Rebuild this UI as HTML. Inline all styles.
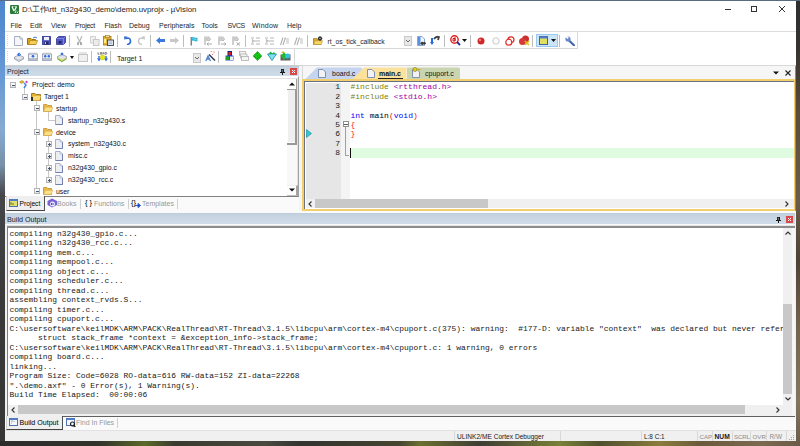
<!DOCTYPE html>
<html><head><meta charset="utf-8">
<style>
*{margin:0;padding:0;box-sizing:border-box}
html,body{width:800px;height:446px;overflow:hidden;background:#2f2e2a;position:relative;font-family:"Liberation Sans",sans-serif;font-size:7px;color:#1e1e1e}
.a{position:absolute}
.t{position:absolute;white-space:pre;line-height:10px}
.mono{font-family:"Liberation Mono",monospace}
.sep{position:absolute;width:1px;background:#c8c8c8}
</style></head><body>
<!-- desktop edges -->
<div class="a" style="left:0;top:0;width:5px;height:446px;background:linear-gradient(#4d85cc 0,#6498d6 70px,#86aad2 130px,#7890a8 165px,#44464a 195px,#3a3a3a 300px,#363636 446px)"></div>
<div class="a" style="left:796px;top:0;width:4px;height:446px;background:linear-gradient(#2e2e2e 0,#363330 50px,#5a4a3a 110px,#6a5c4a 200px,#4e4236 260px,#74644f 330px,#857560 400px,#6a5a48 446px)"></div>
<div class="a" style="left:0;top:441px;width:800px;height:5px;background:linear-gradient(90deg,#2c2c2a 0,#33332c 100px,#5a6a28 145px,#3a3a30 175px,#4a4a40 265px,#333330 300px,#454530 400px,#6a7030 420px,#3e3e34 480px,#7a8038 560px,#50502e 600px,#8a7c3c 660px,#6a5a3a 700px,#7a6a50 760px,#6a5a48 800px)"></div>
<div class="a" style="left:0;top:0;width:800px;height:1px;background:#5a6a80"></div>

<!-- window -->
<div class="a" id="win" style="left:5px;top:1px;width:791px;height:440px;background:#fff"></div>


<!-- title bar -->
<svg class="a" style="left:10px;top:5px" width="9" height="9" viewBox="0 0 9 9"><rect x="0" y="0" width="9" height="9" rx="1" fill="#2b7a3b"/><path d="M2 1.5L4 6M6.5 1.5L4.6 5.5" stroke="#f4fff4" stroke-width="1.3"/><path d="M2 1.5H7" stroke="#d8f0d8" stroke-width="0.8" stroke-dasharray="1 0.6"/><path d="M5 8L6.2 5.5M7 8.2L8 6.5" stroke="#e8f8e8" stroke-width="1"/></svg>
<div class="t" style="left:22px;top:5px;font-size:7.8px;color:#222">D:\<span style="font-size:7.8px;letter-spacing:-0.35px">工作</span>\rtt_n32g430_demo\demo.uvprojx - µVision</div>
<!-- caption buttons -->
<div class="a" style="left:725px;top:9px;width:6px;height:1px;background:#333"></div>
<div class="a" style="left:751px;top:6px;width:6px;height:6px;border:1px solid #333"></div>
<svg class="a" style="left:778px;top:5px" width="8" height="8"><path d="M1 1L7 7M7 1L1 7" stroke="#333" stroke-width="1"/></svg>
<!-- menu -->
<div class="t" style="left:10.5px;top:21px">File</div>
<div class="t" style="left:30px;top:21px">Edit</div>
<div class="t" style="left:51px;top:21px">View</div>
<div class="t" style="left:75px;top:21px;letter-spacing:-0.25px">Project</div>
<div class="t" style="left:104.5px;top:21px">Flash</div>
<div class="t" style="left:129px;top:21px">Debug</div>
<div class="t" style="left:159px;top:21px">Peripherals</div>
<div class="t" style="left:201.5px;top:21px">Tools</div>
<div class="t" style="left:227.5px;top:21px;letter-spacing:-0.45px">SVCS</div>
<div class="t" style="left:252px;top:21px;letter-spacing:0.25px">Window</div>
<div class="t" style="left:287px;top:21px">Help</div>
<div class="a" style="left:5px;top:31px;width:791px;height:1px;background:#dcdcdc"></div>
<!-- toolbar 1 -->
<div class="a" style="left:5px;top:48px;width:573px;height:1px;background:#d8d8d8"></div>
<div class="a" style="left:577px;top:32px;width:1px;height:17px;background:#d8d8d8"></div>
<div class="a" style="left:7px;top:35px;width:1px;height:11px;border-left:1px dotted #d4d4d4"></div>
<svg class="a" style="left:14px;top:36px" width="9" height="10" viewBox="0 0 9 10"><path d="M0.5 0.5H6L8.5 3V9.5H0.5Z" fill="#f4f6fa" stroke="#a8b0c0"/><path d="M6 0.5V3H8.5" fill="none" stroke="#a8b0c0"/></svg>
<svg class="a" style="left:27px;top:36px" width="11" height="9" viewBox="0 0 11 9"><path d="M0.5 2.5H4L5 3.5H8.5V8.5H0.5Z" fill="#d9a520" stroke="#a07010"/><path d="M1.5 8.5L3 4.5H10.5L9 8.5Z" fill="#f5cf5a" stroke="#b8861a" stroke-width="0.8"/><path d="M6 2Q8 0 10 2" stroke="#3a7ad0" fill="none"/></svg>
<svg class="a" style="left:42px;top:36px" width="9" height="9" viewBox="0 0 9 9"><rect x="0.5" y="0.5" width="8" height="8" fill="#4a52c4" stroke="#2e3690" stroke-width="0.8"/><rect x="2" y="1" width="5" height="3.2" fill="#eef0ff"/><rect x="2.5" y="5.5" width="4" height="3" fill="#24285a"/><rect x="3" y="6" width="1" height="2" fill="#c0c8f0"/></svg>
<svg class="a" style="left:56px;top:36px" width="10" height="9" viewBox="0 0 10 9"><path d="M2.5 0.5H9.5V6.5L7.5 8.5H0.5V2.5Z" fill="#5056c4" stroke="#2e3690" stroke-width="0.8"/><path d="M0.5 2.5H7.5V8.5M7.5 2.5L9.5 0.5" fill="none" stroke="#9098e8" stroke-width="0.7"/><rect x="2.5" y="5" width="3" height="2.5" fill="#24285a"/></svg>
<div class="sep" style="left:69px;top:35px;height:12px;background:#bdbdbd"></div>
<svg class="a" style="left:76px;top:36px" width="7" height="10" viewBox="0 0 7 10"><path d="M1 0L3.5 5.5M6 0L3.5 5.5" stroke="#b8b8b8" stroke-width="1.2" fill="none"/><path d="M1.5 6L3.5 5.5L2.5 9.5L0.8 8.5Z" fill="#a8a8a8"/><path d="M5.5 6L3.5 5.5L4.5 9.5L6.2 8.5Z" fill="#a0a0a0"/></svg>
<svg class="a" style="left:90px;top:36px" width="10" height="10" viewBox="0 0 10 10"><rect x="0.5" y="0.5" width="5" height="6.5" fill="#eeeeee" stroke="#d4d4d4"/><rect x="3.5" y="3.5" width="5.5" height="6" fill="#ececec" stroke="#c8c8c8"/></svg>
<svg class="a" style="left:103px;top:35px" width="11" height="11" viewBox="0 0 11 11"><rect x="0.5" y="1.5" width="7.5" height="8.5" fill="#e6b22a" stroke="#a07818" stroke-width="0.8"/><rect x="2.3" y="0.5" width="4" height="2" fill="#f4e4a0" stroke="#907020" stroke-width="0.6"/><rect x="1.2" y="4" width="1.8" height="4" fill="#fff2b0"/><rect x="4.5" y="5" width="6" height="5.5" fill="#dfe6f2" stroke="#3a4658" stroke-width="0.9"/><path d="M5.5 7H9M5.5 8.5H9" stroke="#90a0b8" stroke-width="0.6"/></svg>
<div class="sep" style="left:117px;top:35px;height:12px;background:#bdbdbd"></div>
<svg class="a" style="left:124px;top:36px" width="8" height="9" viewBox="0 0 8 9"><path d="M1.5 2.5Q6.5 1 6.5 5Q6.5 8 3 8.5" stroke="#2a6ad8" stroke-width="1.6" fill="none"/><path d="M0 0.5L3.5 0.5L0.5 4Z" fill="#2a6ad8"/></svg>
<svg class="a" style="left:137px;top:36px" width="8" height="9" viewBox="0 0 8 9"><path d="M6.5 2.5Q1.5 1 1.5 5Q1.5 8 5 8.5" stroke="#c4c4c4" stroke-width="1.4" fill="none"/><path d="M8 0.5L4.5 0.5L7.5 4Z" fill="#c4c4c4"/></svg>
<div class="sep" style="left:150px;top:35px;height:12px;background:#bdbdbd"></div>
<svg class="a" style="left:156px;top:37px" width="9" height="7" viewBox="0 0 9 7"><path d="M0 3.5L4 0V2H9V5H4V7Z" fill="#3a7ae0"/></svg>
<svg class="a" style="left:170px;top:37px" width="9" height="7" viewBox="0 0 9 7"><path d="M9 3.5L5 0V2H0V5H5V7Z" fill="#c8c8c8"/></svg>
<div class="sep" style="left:183px;top:35px;height:12px;background:#bdbdbd"></div>
<svg class="a" style="left:190px;top:36px" width="8" height="10" viewBox="0 0 8 10"><path d="M1.2 1V9.5" stroke="#505860" stroke-width="1.1"/><path d="M1.7 1.2Q3 0.4 4.5 1.4Q6 2.2 7.5 1.6V5.2Q6 5.8 4.5 5Q3 4.2 1.7 5Z" fill="#38b8d8"/><path d="M2.5 2H4M4.5 3.5H6" stroke="#a8e8f8" stroke-width="0.7"/></svg>
<svg class="a" style="left:204px;top:36px" width="9" height="10" viewBox="0 0 9 10"><path d="M1 0.5V9" stroke="#a8a8a8" stroke-width="1.1"/><path d="M1.5 0.5H5.5V5H1.5Z" fill="#c4c4c4"/><path d="M2.5 1.5H3.5M4 3H5M2.5 4H3.5" stroke="#e8e8e8" stroke-width="0.8"/><path d="M5 1.5L6.5 3L5 5" stroke="#b0b0b0" fill="none"/><path d="M3 8H8M3 8L4.5 6.5M3 8L4.5 9.5" stroke="#a0a0a0" stroke-width="0.9" fill="none"/></svg>
<svg class="a" style="left:218px;top:36px" width="9" height="10" viewBox="0 0 9 10"><path d="M1 0.5V9" stroke="#a8a8a8" stroke-width="1.1"/><path d="M1.5 0.5H5.5V5H1.5Z" fill="#c4c4c4"/><path d="M2.5 1.5H3.5M4 3H5M2.5 4H3.5" stroke="#e8e8e8" stroke-width="0.8"/><path d="M5 1.5L6.5 3L5 5" stroke="#b0b0b0" fill="none"/><path d="M3 8H8M8 8L6.5 6.5M8 8L6.5 9.5" stroke="#a0a0a0" stroke-width="0.9" fill="none"/></svg>
<svg class="a" style="left:232px;top:36px" width="9" height="10" viewBox="0 0 9 10"><path d="M1 0.5V9" stroke="#a8a8a8" stroke-width="1.1"/><path d="M1.5 0.5H5.5V5H1.5Z" fill="#c4c4c4"/><path d="M2.5 1.5H3.5M4 3H5M2.5 4H3.5" stroke="#e8e8e8" stroke-width="0.8"/><path d="M5 1.5L6.5 3L5 5" stroke="#b0b0b0" fill="none"/><path d="M4.5 6.5L8 9.5M8 6.5L4.5 9.5" stroke="#a0a0a0" stroke-width="0.9" fill="none"/></svg>
<div class="sep" style="left:245px;top:35px;height:12px;background:#bdbdbd"></div>
<svg class="a" style="left:251px;top:37px" width="10" height="8" viewBox="0 0 10 8"><path d="M0 1H3M5 1H9M2 4H9M0 7H3M5 7H9M1 2.5L2.5 4L1 5.5" fill="none" stroke="#b4b4b4" stroke-width="1.2"/></svg>
<svg class="a" style="left:265px;top:37px" width="10" height="8" viewBox="0 0 10 8"><path d="M0 1H3M5 1H9M2 4H9M0 7H3M5 7H9M1 2.5L2.5 4L1 5.5" fill="none" stroke="#b4b4b4" stroke-width="1.2"/></svg>
<svg class="a" style="left:280px;top:37px" width="10" height="9" viewBox="0 0 10 9"><path d="M0.5 8L3 0.5M3 8L5.5 0.5" stroke="#b0b0b0" stroke-width="1.1"/><path d="M6 2H9M6 4H9M6 6H9" stroke="#c0c0c0"/></svg>
<svg class="a" style="left:294px;top:37px" width="10" height="9" viewBox="0 0 10 9"><path d="M0.5 8L3 0.5M3 8L5.5 0.5" stroke="#b0b0b0" stroke-width="1.1"/><path d="M6 2H9M6 4H9M6 6H9" stroke="#c0c0c0"/></svg>
<div class="sep" style="left:307px;top:35px;height:12px;background:#bdbdbd"></div>
<svg class="a" style="left:313px;top:36px" width="10" height="9" viewBox="0 0 10 9"><path d="M0.5 2.5H3.5L4.5 3.5H8V8.5H0.5Z" fill="#d8a830" stroke="#9a7418" stroke-width="0.7"/><path d="M0.8 8.5L2 4.8H9.5L8.3 8.5Z" fill="#f6d66a" stroke="#b8902a" stroke-width="0.5"/><circle cx="7" cy="2.5" r="2" fill="#2a2a2a"/><path d="M7 0V5M4.5 2.5H9.5M5.3 0.8L8.7 4.2M8.7 0.8L5.3 4.2" stroke="#2a2a2a" stroke-width="0.6"/><circle cx="7" cy="2.5" r="0.7" fill="#d0d0d0"/></svg>
<div class="t" style="left:327.5px;top:36.5px;color:#1a1a1a;font-size:6.75px">rt_os_tick_callback</div>
<div class="a" style="left:404px;top:36px;width:8px;height:10px;background:#e8e8e8;border:1px solid #c8c8c8"></div>
<svg class="a" style="left:405px;top:39px" width="6" height="4" viewBox="0 0 6 4"><path d="M1 1L3 3L5 1" stroke="#666" fill="none"/></svg>
<svg class="a" style="left:417px;top:36px" width="9" height="10" viewBox="0 0 9 10"><path d="M0.5 0.5H5L7.5 3V9.5H0.5Z" fill="#f0f4fc" stroke="#7090c8" stroke-width="0.8"/><rect x="1" y="1" width="2.5" height="8" fill="#5a90e0"/><circle cx="5.2" cy="7.3" r="1.6" fill="#3a3a3a"/><circle cx="7.4" cy="7.3" r="1.4" fill="#3a3a3a"/></svg>
<svg class="a" style="left:430px;top:35px" width="10" height="11" viewBox="0 0 10 11"><path d="M2 3V8" stroke="#2a6ad8" stroke-width="2"/><path d="M0 7H4L2 10Z" fill="#2a6ad8"/><path d="M4 4Q6 1 9 2L8 5" stroke="#404040" stroke-width="1.8" fill="none"/></svg>
<div class="sep" style="left:444px;top:35px;height:12px;background:#bdbdbd"></div>
<svg class="a" style="left:450px;top:35px" width="11" height="11" viewBox="0 0 11 11"><circle cx="4.5" cy="4.5" r="3.7" fill="#fff" stroke="#e02020" stroke-width="1.4"/><path d="M3 3.5H5V6H3Z M5 2V6" stroke="#d01010" stroke-width="1" fill="none"/><path d="M7 7L10 10" stroke="#2030a0" stroke-width="1.8"/></svg>
<svg class="a" style="left:462px;top:39px" width="5" height="3" viewBox="0 0 5 3"><path d="M0 0H5L2.5 3Z" fill="#111"/></svg>
<div class="sep" style="left:470px;top:35px;height:12px;background:#bdbdbd"></div>
<svg class="a" style="left:477px;top:37px" width="8" height="8" viewBox="0 0 8 8"><circle cx="4" cy="4" r="3.5" fill="#d02828"/><circle cx="3" cy="3" r="1.2" fill="#f08080"/></svg>
<svg class="a" style="left:492px;top:37px" width="8" height="8" viewBox="0 0 8 8"><circle cx="4" cy="4" r="3.2" fill="#fff" stroke="#c8c8c8"/></svg>
<svg class="a" style="left:505px;top:36px" width="10" height="10" viewBox="0 0 10 10"><circle cx="6" cy="3.8" r="3" fill="none" stroke="#e02828" stroke-width="1.2"/><circle cx="3.8" cy="6.2" r="3" fill="#fff" stroke="#e02828" stroke-width="1.2"/></svg>
<svg class="a" style="left:519px;top:35px" width="11" height="11" viewBox="0 0 11 11"><circle cx="6.5" cy="4" r="3.5" fill="#c83030"/><circle cx="3.5" cy="6.5" r="3.5" fill="#d83838"/><path d="M6 6L10 10M10 6L6 10" stroke="#d8c020" stroke-width="1.6"/></svg>
<div class="sep" style="left:532px;top:35px;height:12px;background:#bdbdbd"></div>
<div class="a" style="left:536px;top:34px;width:22px;height:13px;background:#cce4f7;border:1px solid #99c9ef"></div>
<svg class="a" style="left:539px;top:36px" width="9" height="9" viewBox="0 0 9 9"><rect x="0.5" y="0.5" width="8" height="8" fill="#e0e060" stroke="#4060a0"/><rect x="0.5" y="0.5" width="8" height="2" fill="#5080c8"/></svg>
<svg class="a" style="left:551px;top:39px" width="5" height="3" viewBox="0 0 5 3"><path d="M0 0H5L2.5 3Z" fill="#111"/></svg>
<div class="sep" style="left:559px;top:35px;height:12px;background:#bdbdbd"></div>
<svg class="a" style="left:565px;top:36px" width="10" height="10" viewBox="0 0 10 10"><path d="M3.5 4L9 9.3" stroke="#4a68b0" stroke-width="2.2" stroke-linecap="round"/><circle cx="3" cy="3" r="2.6" fill="#6a88c8"/><path d="M0.8 1.2L2.6 3L3.8 1.8L2 0Z" fill="#fff"/></svg>
<!-- toolbar 2 -->
<div class="a" style="left:5px;top:64.5px;width:791px;height:1.5px;background:#cfcfcf"></div>
<div class="a" style="left:294px;top:49px;width:1px;height:16px;background:#d8d8d8"></div>
<div class="a" style="left:7px;top:51px;width:1px;height:11px;border-left:1px dotted #d4d4d4"></div>
<svg class="a" style="left:14px;top:52px" width="10" height="10" viewBox="0 0 10 10"><path d="M0.5 5L5 3L9.5 5V7L5 9.5L0.5 7Z" fill="#e4e8ee" stroke="#8a94a4" stroke-width="0.8"/><path d="M0.5 6L5 8.3L9.5 6" stroke="#a0a8b4" stroke-width="0.6" fill="none"/><path d="M5 0.5L7 2.5L5 4.5L3 2.5Z" fill="#2a6ae0"/><path d="M5 1.5L6 2.5L5 3.5" fill="#fff" opacity="0.6"/></svg>
<svg class="a" style="left:28px;top:52px" width="10" height="9" viewBox="0 0 10 9"><rect x="0.5" y="2" width="9" height="6.5" fill="#eef0f4" stroke="#8a94a8" stroke-width="0.8"/><rect x="0.8" y="6" width="8.4" height="2.3" fill="#b8c0cc"/><path d="M2 0.5V2M4 0.5V2M6 0.5V2M8 0.5V2" stroke="#9aa0aa" stroke-width="0.7"/><circle cx="5" cy="4.2" r="1.3" fill="#2a6ae0"/></svg>
<svg class="a" style="left:42px;top:52px" width="10" height="9" viewBox="0 0 10 9"><rect x="0.5" y="2" width="9" height="6.5" fill="#eef0f4" stroke="#8a94a8" stroke-width="0.8"/><rect x="0.8" y="6" width="8.4" height="2.3" fill="#b8c0cc"/><path d="M2 0.5V2M4 0.5V2M6 0.5V2M8 0.5V2" stroke="#9aa0aa" stroke-width="0.7"/><circle cx="3.2" cy="4.2" r="1.2" fill="#2a6ae0"/><circle cx="6.8" cy="4.2" r="1.2" fill="#2a6ae0"/></svg>
<svg class="a" style="left:57px;top:52px" width="10" height="10" viewBox="0 0 10 10"><path d="M0.5 4.5L5 2.5L9.5 4.5V6.5L5 9.5L0.5 6.5Z" fill="#dfe3ea" stroke="#8a94a4" stroke-width="0.8"/><path d="M0.5 6.5L5 9L9.5 6.5V7.5L5 10L0.5 7.5Z" fill="#6cb030"/><path d="M1 6L5 8.2L9 6" stroke="#d8d020" stroke-width="0.8" fill="none"/><path d="M5 0.3L6.6 1.9L5 3.5L3.4 1.9Z" fill="#2a6ae0"/></svg>
<svg class="a" style="left:70px;top:56px" width="4" height="3" viewBox="0 0 4 3"><path d="M0 0H4L2 3Z" fill="#111"/></svg>
<svg class="a" style="left:78px;top:52px" width="10" height="10" viewBox="0 0 10 10"><rect x="0.5" y="2.5" width="9" height="7" fill="#f0f0f0" stroke="#c4c4c4"/><path d="M2 0V2M4 0V2M6 0V2M8 0V2" stroke="#c8c8c8"/></svg>
<div class="sep" style="left:91px;top:51px;height:12px;background:#bdbdbd"></div>
<svg class="a" style="left:97px;top:52px" width="11" height="10" viewBox="0 0 11 10"><path d="M1 0.3V2.3H2.3M3.3 0.5H4.7V2.2H3.3ZM5.6 2.3L6.3 0.4L7 2.3M8 0.4V2.3H9Q9.8 2.3 9.8 1.35Q9.8 0.4 9 0.4Z" stroke="#3a3a3a" stroke-width="0.6" fill="none"/><path d="M2 4V6.5M9 4V6.5" stroke="#2a6ae0" stroke-width="1.4"/><path d="M0 6.2H4L2 9.5ZM7 6.2H11L9 9.5Z" fill="#2a6ae0"/><circle cx="5.5" cy="5.5" r="2.4" fill="#e8e818" stroke="#b8b800" stroke-width="0.4"/></svg>
<div class="sep" style="left:110px;top:51px;height:12px;background:#bdbdbd"></div>
<div class="t" style="left:117px;top:54px;color:#222">Target 1</div>
<div class="a" style="left:193px;top:53px;width:8px;height:10px;background:#e8e8e8;border:1px solid #c8c8c8"></div>
<svg class="a" style="left:194px;top:56px" width="6" height="4" viewBox="0 0 6 4"><path d="M1 1L3 3L5 1" stroke="#666" fill="none"/></svg>
<svg class="a" style="left:205px;top:51px" width="11" height="11" viewBox="0 0 11 11"><path d="M0.8 10L3 5L5.5 10M1.8 8H4.5" stroke="#5080d0" stroke-width="1.3" fill="none"/><path d="M4 3.5L10 9.5" stroke="#303848" stroke-width="1.5"/><path d="M6 1L6.5 0M8.5 2L9.5 1.5M7 3.5L8 3.5M9 0.5V1" stroke="#e05050" stroke-width="0.8"/></svg>
<div class="sep" style="left:218px;top:51px;height:12px;background:#bdbdbd"></div>
<svg class="a" style="left:225px;top:51px" width="9" height="10" viewBox="0 0 9 10"><rect x="3" y="0.5" width="3.5" height="4" fill="#e02020" stroke="#202080"/><rect x="0.5" y="4.5" width="8" height="5" fill="#3050c0"/><rect x="1" y="5.5" width="3" height="3.5" fill="#20a020"/><rect x="5" y="5.5" width="3" height="3.5" fill="#f0f0f0"/></svg>
<svg class="a" style="left:239px;top:51px" width="10" height="10" viewBox="0 0 10 10"><rect x="0.5" y="0.5" width="6" height="4" fill="#f2f2f2" stroke="#b4b4b4" stroke-width="0.8"/><rect x="1.5" y="3" width="6.5" height="4" fill="#f2f2f2" stroke="#b4b4b4" stroke-width="0.8"/><rect x="2.5" y="5.5" width="7" height="4" fill="#f4f4f4" stroke="#b0b0b0" stroke-width="0.8"/></svg>
<svg class="a" style="left:253px;top:51px" width="9" height="10" viewBox="0 0 9 10"><path d="M4.5 0.5L8.7 5L4.5 9.5L0.3 5Z" fill="#18d818" stroke="#0a8a0a" stroke-width="0.7"/><path d="M4.5 2.2V2.8M3 3.8V4.4M6 3.8V4.4M1.8 5V5.6M4.5 4.8V5.4M7.2 5V5.6M3 6.2V6.8M6 6.2V6.8M4.5 7.4V8" stroke="#064a06" stroke-width="0.9"/></svg>
<svg class="a" style="left:267px;top:51px" width="10" height="10" viewBox="0 0 10 10"><path d="M0.5 3H9.5L5 9.5Z" fill="#80e0f0" stroke="#30a0b0"/><path d="M1.5 3L3.5 0.5L5.5 2.5L7 1L8.5 3" fill="#20b040"/></svg>
<svg class="a" style="left:280px;top:51px" width="11" height="10" viewBox="0 0 11 10"><rect x="0.5" y="3.5" width="10" height="6" fill="#606060"/><path d="M1 5L4 1L7 5L4 9Z" fill="#20b830"/><circle cx="7.5" cy="5" r="2.5" fill="#30c0e0"/><path d="M1 2L3 0L5 2" fill="#d0c020"/></svg>
<!-- project pane -->
<div class="a" style="left:5px;top:66px;width:294px;height:10px;background:linear-gradient(#b9c9da,#c4d2e0 1.5px,#d0dce9)"></div>
<div class="t" style="left:7px;top:67px;color:#1e1e2e">Project</div>
<svg class="a" style="left:280px;top:69px" width="5" height="6" viewBox="0 0 5 6"><path d="M1 0H4V3H5V4H3V6H2V4H0V3H1Z" fill="#1a1a1a"/><rect x="1.8" y="0.8" width="1" height="2" fill="#888"/></svg>
<div class="a" style="left:290px;top:68px;width:7px;height:7px;background:#d84a4a"></div>
<svg class="a" style="left:290px;top:68px" width="7" height="7" viewBox="0 0 7 7"><path d="M2 2L5 5M5 2L2 5" stroke="#fff" stroke-width="1"/></svg>
<div class="a" style="left:5px;top:76px;width:294px;height:121px;background:#fff;border-top:1px solid #fff;box-shadow:inset 0 1px 0 #fff,inset 0 2px 0 #e2e2e2;border-right:1px solid #a0a0a0;border-bottom:1px solid #808080"></div>
<div class="a" style="left:299px;top:66px;width:3px;height:147px;background:#f5f5f5"></div>
<div class="a" style="left:287px;top:79px;width:11px;height:117px;background:#f8f8f8;border-right:1px solid #e2e2e2"></div>
<div class="a" style="left:287px;top:79px;width:10px;height:11px;background:#fdfdfd;border-bottom:1px solid #a0a0a0;border-right:1px solid #a0a0a0"></div>
<svg class="a" style="left:289px;top:82px" width="6" height="4" viewBox="0 0 6 4"><path d="M0 3.5H6L3 0.5Z" fill="#111"/></svg>
<div class="a" style="left:287px;top:90px;width:10px;height:55px;background:#efefef;border-bottom:2px solid #989898;border-right:2px solid #989898;box-shadow:inset 1px 0 0 #fff, inset 0 -1px 0 #fff"></div>
<div class="a" style="left:287px;top:185px;width:11px;height:11px;background:#fdfdfd;border-right:2px solid #a4a4a4;border-bottom:1px solid #c0c0c0;border-top:1px solid #f0f0f0"></div>
<svg class="a" style="left:289px;top:188px" width="6" height="4" viewBox="0 0 6 4"><path d="M0 0.5H6L3 3.5Z" fill="#111"/></svg>
<!-- tree start -->
<div class="a" style="left:24px;top:88px;width:1px;height:6px;background:#c8c8c8"></div>
<div class="a" style="left:36px;top:101px;width:1px;height:87px;background:#c8c8c8"></div>
<div class="a" style="left:48px;top:111px;width:1px;height:10px;background:#c8c8c8"></div>
<div class="a" style="left:48px;top:120px;width:7px;height:1px;background:#c8c8c8"></div>
<div class="a" style="left:48px;top:136px;width:1px;height:44px;background:#c8c8c8"></div>
<div class="a" style="left:10px;top:82px;width:6px;height:6px;background:linear-gradient(#fdfdfd,#e4e4e4);border:1px solid #b4b4b4"></div>
<div class="a" style="left:11.5px;top:85px;width:3px;height:1px;background:#4a5a7a"></div>
<svg class="a" style="left:19px;top:80px" width="10" height="10" viewBox="0 0 10 10"><path d="M0.5 2L3 0.5L5 2L2.5 3.5Z" fill="#e0c020" stroke="#a08010" stroke-width="0.6"/><path d="M5 3L7 5L5 8" stroke="#4080e0" stroke-width="1.4" fill="none"/><circle cx="7.5" cy="2" r="1.2" fill="#e040c0"/></svg>
<div class="t" style="left:32px;top:80px;color:#10101e;font-size:6.9px">Project: demo</div>
<div class="a" style="left:22px;top:94px;width:6px;height:6px;background:linear-gradient(#fdfdfd,#e4e4e4);border:1px solid #b4b4b4"></div>
<div class="a" style="left:23.5px;top:97px;width:3px;height:1px;background:#4a5a7a"></div>
<svg class="a" style="left:31px;top:92px" width="10" height="9" viewBox="0 0 10 9"><path d="M0.5 1.5H4L5 2.5H9.5V8.5H0.5Z" fill="#e0b030" stroke="#906a10" stroke-width="0.8"/><path d="M1 8.5L2.5 4H9.8L8.5 8.5Z" fill="#f8d870"/><rect x="0" y="5" width="2" height="4" fill="#303030"/></svg>
<div class="t" style="left:44px;top:92px;color:#10101e;font-size:6.9px">Target 1</div>
<div class="a" style="left:34px;top:105px;width:6px;height:6px;background:linear-gradient(#fdfdfd,#e4e4e4);border:1px solid #b4b4b4"></div>
<div class="a" style="left:35.5px;top:108px;width:3px;height:1px;background:#4a5a7a"></div>
<svg class="a" style="left:43px;top:104px" width="10" height="8" viewBox="0 0 10 8"><path d="M0.5 0.5H4L5 1.5H8.5V7.5H0.5Z" fill="#e8b848" stroke="#b88a28" stroke-width="0.7"/><path d="M0.6 7.5L2.2 3.2H9.8L8.4 7.5Z" fill="#fbe08a" stroke="#d0a040" stroke-width="0.5"/></svg>
<div class="t" style="left:56px;top:104px;color:#10101e;font-size:6.9px">startup</div>
<svg class="a" style="left:55px;top:115px" width="8" height="10" viewBox="0 0 8 10"><path d="M0.5 0.5H5L7.5 3V9.5H0.5Z" fill="#eceef2" stroke="#a4b0cc"/><path d="M0.5 9.5H7.5M7.5 3V9.5" stroke="#7080b0"/><path d="M5 0.5V3H7.5" fill="#d8dce8" stroke="#a4b0cc" stroke-width="0.6"/></svg>
<div class="t" style="left:68px;top:116px;color:#10101e;font-size:6.9px">startup_n32g430.s</div>
<div class="a" style="left:34px;top:129px;width:6px;height:6px;background:linear-gradient(#fdfdfd,#e4e4e4);border:1px solid #b4b4b4"></div>
<div class="a" style="left:35.5px;top:132px;width:3px;height:1px;background:#4a5a7a"></div>
<svg class="a" style="left:43px;top:128px" width="10" height="8" viewBox="0 0 10 8"><path d="M0.5 0.5H4L5 1.5H8.5V7.5H0.5Z" fill="#e8b848" stroke="#b88a28" stroke-width="0.7"/><path d="M0.6 7.5L2.2 3.2H9.8L8.4 7.5Z" fill="#fbe08a" stroke="#d0a040" stroke-width="0.5"/></svg>
<div class="t" style="left:56px;top:128px;color:#10101e;font-size:6.9px">device</div>
<div class="a" style="left:46px;top:141px;width:6px;height:6px;background:linear-gradient(#fdfdfd,#e4e4e4);border:1px solid #b4b4b4"></div>
<div class="a" style="left:47.5px;top:144px;width:3px;height:1px;background:#4a5a7a"></div>
<div class="a" style="left:48.5px;top:143px;width:1px;height:3px;background:#4a5a7a"></div>
<svg class="a" style="left:55px;top:139px" width="8" height="10" viewBox="0 0 8 10"><path d="M0.5 0.5H5L7.5 3V9.5H0.5Z" fill="#eceef2" stroke="#a4b0cc"/><path d="M0.5 9.5H7.5M7.5 3V9.5" stroke="#7080b0"/><path d="M5 0.5V3H7.5" fill="#d8dce8" stroke="#a4b0cc" stroke-width="0.6"/></svg>
<div class="t" style="left:68px;top:139px;color:#10101e;font-size:6.9px">system_n32g430.c</div>
<div class="a" style="left:46px;top:153px;width:6px;height:6px;background:linear-gradient(#fdfdfd,#e4e4e4);border:1px solid #b4b4b4"></div>
<div class="a" style="left:47.5px;top:156px;width:3px;height:1px;background:#4a5a7a"></div>
<div class="a" style="left:48.5px;top:155px;width:1px;height:3px;background:#4a5a7a"></div>
<svg class="a" style="left:55px;top:151px" width="8" height="10" viewBox="0 0 8 10"><path d="M0.5 0.5H5L7.5 3V9.5H0.5Z" fill="#eceef2" stroke="#a4b0cc"/><path d="M0.5 9.5H7.5M7.5 3V9.5" stroke="#7080b0"/><path d="M5 0.5V3H7.5" fill="#d8dce8" stroke="#a4b0cc" stroke-width="0.6"/></svg>
<div class="t" style="left:68px;top:151px;color:#10101e;font-size:6.9px">misc.c</div>
<div class="a" style="left:46px;top:165px;width:6px;height:6px;background:linear-gradient(#fdfdfd,#e4e4e4);border:1px solid #b4b4b4"></div>
<div class="a" style="left:47.5px;top:168px;width:3px;height:1px;background:#4a5a7a"></div>
<div class="a" style="left:48.5px;top:167px;width:1px;height:3px;background:#4a5a7a"></div>
<svg class="a" style="left:55px;top:163px" width="8" height="10" viewBox="0 0 8 10"><path d="M0.5 0.5H5L7.5 3V9.5H0.5Z" fill="#eceef2" stroke="#a4b0cc"/><path d="M0.5 9.5H7.5M7.5 3V9.5" stroke="#7080b0"/><path d="M5 0.5V3H7.5" fill="#d8dce8" stroke="#a4b0cc" stroke-width="0.6"/></svg>
<div class="t" style="left:68px;top:163px;color:#10101e;font-size:6.9px">n32g430_gpio.c</div>
<div class="a" style="left:46px;top:177px;width:6px;height:6px;background:linear-gradient(#fdfdfd,#e4e4e4);border:1px solid #b4b4b4"></div>
<div class="a" style="left:47.5px;top:180px;width:3px;height:1px;background:#4a5a7a"></div>
<div class="a" style="left:48.5px;top:179px;width:1px;height:3px;background:#4a5a7a"></div>
<svg class="a" style="left:55px;top:175px" width="8" height="10" viewBox="0 0 8 10"><path d="M0.5 0.5H5L7.5 3V9.5H0.5Z" fill="#eceef2" stroke="#a4b0cc"/><path d="M0.5 9.5H7.5M7.5 3V9.5" stroke="#7080b0"/><path d="M5 0.5V3H7.5" fill="#d8dce8" stroke="#a4b0cc" stroke-width="0.6"/></svg>
<div class="t" style="left:68px;top:175px;color:#10101e;font-size:6.9px">n32g430_rcc.c</div>
<div class="a" style="left:34px;top:188px;width:6px;height:6px;background:linear-gradient(#fdfdfd,#e4e4e4);border:1px solid #b4b4b4"></div>
<div class="a" style="left:35.5px;top:191px;width:3px;height:1px;background:#4a5a7a"></div>
<svg class="a" style="left:43px;top:187px" width="10" height="8" viewBox="0 0 10 8"><path d="M0.5 0.5H4L5 1.5H8.5V7.5H0.5Z" fill="#e8b848" stroke="#b88a28" stroke-width="0.7"/><path d="M0.6 7.5L2.2 3.2H9.8L8.4 7.5Z" fill="#fbe08a" stroke="#d0a040" stroke-width="0.5"/></svg>
<div class="t" style="left:56px;top:187px;color:#10101e;font-size:6.9px">user</div>
<!-- tree end -->
<div class="a" style="left:5px;top:197px;width:294px;height:14px;background:#fafafa"></div>
<div class="a" style="left:5px;top:211px;width:294px;height:2px;background:#f6f6f6"></div>
<div class="a" style="left:6px;top:196px;width:39px;height:15px;background:#efefef;border-left:1px solid #d0d0d0;border-bottom:1px solid #454545;border-right:1px solid #505050"></div>
<svg class="a" style="left:9px;top:199px" width="9" height="8" viewBox="0 0 9 8"><rect x="0.5" y="0.5" width="8" height="7" fill="#e0e070" stroke="#5070b0"/><rect x="0.5" y="0.5" width="8" height="1.5" fill="#5080c8"/><path d="M2 3V6M4 4V6" stroke="#607020"/></svg>
<div class="t" style="left:19.5px;top:199px;color:#000;font-size:6.7px">Project</div>
<svg class="a" style="left:47px;top:198px" width="11" height="10" viewBox="0 0 11 10"><path d="M5 0.5L10 3V7L5 9.5L0.5 7V3Z" fill="#7a60d0"/><circle cx="5.5" cy="6" r="2.5" fill="#e8e8ff"/><path d="M4.5 5V7M6 5V7" stroke="#5050a0"/></svg>
<div class="t" style="left:57px;top:199px;color:#989898">Books</div>
<div class="a" style="left:80px;top:199px;width:1px;height:10px;background:#d0d0d0"></div>
<div class="t" style="left:85px;top:198px;color:#000;font-size:7.5px">{ }</div>
<div class="t" style="left:94px;top:199px;color:#989898">Functions</div>
<div class="a" style="left:128px;top:199px;width:1px;height:10px;background:#d0d0d0"></div>
<div class="t" style="left:131px;top:198px;color:#000;font-size:7.5px">{}</div>
<svg class="a" style="left:135px;top:203px" width="6" height="5" viewBox="0 0 6 5"><path d="M0 2.5H3M3 0.5L5.5 2.5L3 4.5Z" stroke="#2050d0" fill="#2050d0" stroke-width="1"/></svg>
<div class="t" style="left:142px;top:199px;color:#989898">Templates</div>
<div class="a" style="left:177px;top:199px;width:1px;height:10px;background:#d0d0d0"></div>
<!-- editor -->
<div class="a" style="left:302px;top:65px;width:493px;height:14px;background:#f6f6f6;border-top:1px solid #d8d8d8;border-left:1px solid #d8d8d8"></div>
<svg class="a" style="left:303px;top:66px" width="160" height="14" viewBox="0 0 160 14"><path d="M2 13.5L14 1.5H58L60 4L50 13.5Z" fill="#c6d5ef"/><path d="M49 13.5L61 1.5H103.5V13.5Z" fill="#fce19c"/><path d="M104 13.5V1.5H155Q157 1.5 157 3.5V13.5Z" fill="#c9d4b0"/></svg>
<svg class="a" style="left:318px;top:69px" width="8" height="9" viewBox="0 0 8 9"><path d="M0.5 0.5H5L7.5 3V8.5H0.5Z" fill="#f2f2f4" stroke="#8090b0"/></svg>
<div class="t" style="left:332px;top:69px;color:#10101a">board.c</div>
<svg class="a" style="left:367px;top:69px" width="8" height="9" viewBox="0 0 8 9"><path d="M0.5 0.5H5L7.5 3V8.5H0.5Z" fill="#f2f2f4" stroke="#8090b0"/></svg>
<div class="t" style="left:379px;top:69px;color:#10101a;font-size:6.95px;font-weight:bold">main.c</div>
<div class="a" style="left:378px;top:78px;width:25px;height:1px;background:#202020"></div>
<svg class="a" style="left:412px;top:67px" width="9" height="11" viewBox="0 0 9 11"><path d="M0.5 2.5H5L7.5 5V10.5H0.5Z" fill="#f2f2f4" stroke="#8090b0"/><circle cx="3" cy="2.5" r="2" fill="#e0d020" stroke="#807010" stroke-width="0.6"/><path d="M5 2.5H8.5" stroke="#c0b020" stroke-width="1.2"/></svg>
<div class="t" style="left:425px;top:69px;color:#10101a">cpuport.c</div>
<svg class="a" style="left:773px;top:71px" width="6" height="4" viewBox="0 0 6 4"><path d="M0 0.5H6L3 3.5Z" fill="#111"/></svg>
<svg class="a" style="left:785px;top:70px" width="6" height="6" viewBox="0 0 6 6"><path d="M0.5 0.5L5.5 5.5M5.5 0.5L0.5 5.5" stroke="#222" stroke-width="1.1"/></svg>
<div class="a" style="left:302px;top:79px;width:493px;height:132px;background:#f2cf6e"></div>
<div class="a" style="left:304px;top:81px;width:490px;height:128px;background:#fff;border-top:1px solid #6a7080;border-left:1px solid #6a7080"></div>
<div class="a" style="left:306px;top:83px;width:35px;height:116px;background:#e6e6e6"></div>
<div class="a" style="left:341px;top:83px;width:9px;height:116px;background:#f4f4f4"></div>
<div class="a" style="left:350px;top:148px;width:444px;height:10px;background:#dffbe0"></div>
<div class="a" style="left:350px;top:148px;width:1px;height:10px;background:#111"></div>
<svg class="a" style="left:306px;top:129px" width="6" height="9" viewBox="0 0 6 9"><path d="M0.5 0.5L5.5 4.5L0.5 8.5Z" fill="#30c8d8" stroke="#108898" stroke-width="0.6"/></svg>
<div class="a" style="left:343px;top:121px;width:6px;height:6px;background:#fff;border:1px solid #909090"></div>
<div class="a" style="left:344px;top:123.5px;width:4px;height:1px;background:#606060"></div>
<div class="a" style="left:345px;top:127px;width:1px;height:28px;background:#a0a0a0"></div>
<div class="a" style="left:345px;top:155px;width:4px;height:1px;background:#a0a0a0"></div>
<div class="a mono" style="left:305px;top:82.2px;width:35px;text-align:right;font-size:8px;line-height:9.43px;color:#1a1a1a">1<br>2<br>3<br>4<br>5<br>6<br>7<br>8</div>
<div class="a mono" style="left:350.5px;top:82.2px;white-space:pre;font-size:8px;line-height:9.43px;color:#000"><span style="color:#808000">#include</span> <span style="color:#a000a0">&lt;rtthread.h&gt;</span><br><span style="color:#808000">#include</span> <span style="color:#a000a0">&lt;stdio.h&gt;</span><br><br><span style="color:#0000ff">int</span> main<span style="color:#ff0000">(</span><span style="color:#0000ff">void</span><span style="color:#ff0000">)</span><br><span style="color:#ff2020">{</span><br><span style="color:#ff2020">}</span><br><br></div>
<div class="a" style="left:306px;top:199px;width:488px;height:9px;background:#f0f0f0"></div>
<div class="a" style="left:315px;top:199px;width:173px;height:9px;background:#c8c8c8"></div>
<svg class="a" style="left:308px;top:201px" width="4" height="6" viewBox="0 0 4 6"><path d="M3.5 0.5L1 3L3.5 5.5" stroke="#333" stroke-width="1.1" fill="none"/></svg>
<svg class="a" style="left:785px;top:201px" width="4" height="6" viewBox="0 0 4 6"><path d="M0.5 0.5L3 3L0.5 5.5" stroke="#333" stroke-width="1.1" fill="none"/></svg>
<div class="a" style="left:795px;top:66px;width:1px;height:145px;background:#8a8a8a"></div>
<!-- build output -->
<div class="a" style="left:5px;top:211px;width:791px;height:230px;background:#f0f0f0"></div>
<div class="a" style="left:5px;top:211px;width:791px;height:2px;background:#fafafa"></div>
<div class="a" style="left:5px;top:213px;width:790px;height:11px;background:linear-gradient(#b9c9da,#c4d2e0 1.5px,#d0dce9)"></div>
<div class="a" style="left:5px;top:224px;width:790px;height:3px;background:#fafafa"></div>
<div class="t" style="left:7px;top:215px;color:#1a1a2a;font-size:7.2px">Build Output</div>
<svg class="a" style="left:776px;top:217px" width="5" height="6" viewBox="0 0 5 6"><path d="M1 0H4V3H5V4H3V6H2V4H0V3H1Z" fill="#1a1a1a"/><rect x="1.8" y="0.8" width="1" height="2" fill="#888"/></svg>
<div class="a" style="left:786px;top:216px;width:7px;height:7px;background:#d84a4a"></div>
<svg class="a" style="left:786px;top:216px" width="7" height="7" viewBox="0 0 7 7"><path d="M2 2L5 5M5 2L2 5" stroke="#fff" stroke-width="1"/></svg>
<div class="a" style="left:5px;top:225px;width:790px;height:1px;background:#e6e6e6"></div>
<div class="a" style="left:7px;top:226px;width:788px;height:191px;background:#fff;border-top:2px solid #8c8c8c;border-left:1px solid #808080;border-bottom:1px solid #606060"></div>
<div class="a" style="left:8px;top:228px;width:775px;height:177px;overflow:hidden"><div class="a mono" style="left:1.5px;top:1px;white-space:pre;font-size:7.93px;line-height:9.47px;color:#202020">compiling n32g430_gpio.c...<br>compiling n32g430_rcc.c...<br>compiling mem.c...<br>compiling mempool.c...<br>compiling object.c...<br>compiling scheduler.c...<br>compiling thread.c...<br>assembling context_rvds.S...<br>compiling timer.c...<br>compiling cpuport.c...<br>C:\usersoftware\keilMDK\ARM\PACK\RealThread\RT-Thread\3.1.5\libcpu\arm\cortex-m4\cpuport.c(375): warning:  #177-D: variable "context"  was declared but never referenced<br>      struct stack_frame *context = &amp;exception_info-&gt;stack_frame;<br>C:\usersoftware\keilMDK\ARM\PACK\RealThread\RT-Thread\3.1.5\libcpu\arm\cortex-m4\cpuport.c: 1 warning, 0 errors<br>compiling board.c...<br>linking...<br>Program Size: Code=6028 RO-data=616 RW-data=152 ZI-data=22268<br>".\demo.axf" - 0 Error(s), 1 Warning(s).<br>Build Time Elapsed:  00:00:06</div></div>
<div class="a" style="left:783px;top:228px;width:9px;height:177px;background:#f0f0f0"></div>
<div class="a" style="left:783px;top:304px;width:9px;height:90px;background:#c8c8c8"></div>
<svg class="a" style="left:785px;top:231px" width="6" height="4" viewBox="0 0 6 4"><path d="M0.5 3.5L3 1L5.5 3.5" stroke="#333" stroke-width="1.1" fill="none"/></svg>
<svg class="a" style="left:785px;top:397px" width="6" height="4" viewBox="0 0 6 4"><path d="M0.5 0.5L3 3L5.5 0.5" stroke="#333" stroke-width="1.1" fill="none"/></svg>
<div class="a" style="left:792px;top:228px;width:3px;height:188px;background:#f6f6f6"></div>
<div class="a" style="left:8px;top:405px;width:784px;height:11px;background:#f0f0f0"></div>
<div class="a" style="left:18px;top:405px;width:727px;height:8.5px;background:#c8c8c8"></div>
<svg class="a" style="left:11px;top:407px" width="4" height="6" viewBox="0 0 4 6"><path d="M3.5 0.5L1 3L3.5 5.5" stroke="#333" stroke-width="1.1" fill="none"/></svg>
<svg class="a" style="left:776px;top:407px" width="4" height="6" viewBox="0 0 4 6"><path d="M0.5 0.5L3 3L0.5 5.5" stroke="#333" stroke-width="1.1" fill="none"/></svg>
<div class="a" style="left:5px;top:417px;width:791px;height:13px;background:#fafafa"></div>
<div class="a" style="left:6px;top:416px;width:57px;height:14px;background:#efefef;border-left:1px solid #d0d0d0;border-bottom:1px solid #454545;border-right:1px solid #505050"></div>
<svg class="a" style="left:9px;top:418px" width="9" height="8" viewBox="0 0 9 8"><rect x="0.5" y="0.5" width="8" height="7" fill="#f4f6fa" stroke="#5070b0"/><rect x="0.5" y="0.5" width="8" height="1.5" fill="#5080c8"/><path d="M2 3H4M2 5H3M5 3V4" stroke="#a0a8b8"/></svg>
<div class="t" style="left:19.5px;top:418px;color:#000;font-size:7.1px">Build Output</div>
<svg class="a" style="left:66px;top:418px" width="10" height="9" viewBox="0 0 10 9"><rect x="0.5" y="0.5" width="8" height="7" fill="#f4f6fa" stroke="#5070b0"/><rect x="0.5" y="0.5" width="8" height="1.5" fill="#5080c8"/><circle cx="6.5" cy="6" r="2" fill="none" stroke="#222" stroke-width="1.2"/><path d="M7 7L9.5 9" stroke="#222" stroke-width="1.2"/></svg>
<div class="t" style="left:76px;top:418px;color:#989898">Find In Files</div>
<div class="a" style="left:117px;top:418px;width:1px;height:10px;background:#d0d0d0"></div>
<!-- status -->
<div class="a" style="left:5px;top:430px;width:791px;height:11px;background:#f0f0f0;border-top:1px solid #e2e2e2"></div>
<div class="a" style="left:454px;top:431px;width:1px;height:10px;background:#d8d8d8"></div>
<div class="a" style="left:560px;top:431px;width:1px;height:10px;background:#d8d8d8"></div>
<div class="a" style="left:641px;top:431px;width:1px;height:10px;background:#d8d8d8"></div>
<div class="a" style="left:697px;top:431px;width:1px;height:10px;background:#d8d8d8"></div>
<div class="a" style="left:712px;top:431px;width:1px;height:10px;background:#d8d8d8"></div>
<div class="a" style="left:732px;top:431px;width:1px;height:10px;background:#d8d8d8"></div>
<div class="a" style="left:750px;top:431px;width:1px;height:10px;background:#d8d8d8"></div>
<div class="a" style="left:766px;top:431px;width:1px;height:10px;background:#d8d8d8"></div>
<div class="a" style="left:786px;top:431px;width:1px;height:10px;background:#d8d8d8"></div>
<div class="t" style="left:457px;top:431.5px;color:#1a1a1a;font-size:6.6px">ULINK2/ME Cortex Debugger</div>
<div class="t" style="left:644px;top:431.5px;color:#1a1a1a;font-size:6.4px">L:8 C:1</div>
<div class="t" style="left:699.5px;top:431.5px;color:#8c8c8c;font-size:6.2px">CAP</div>
<div class="t" style="left:714.5px;top:431.5px;color:#1a1a2a;font-weight:bold;font-size:6.7px">NUM</div>
<div class="t" style="left:734px;top:431.5px;color:#8c8c8c;font-size:6.2px;letter-spacing:-0.2px">SCRL</div>
<div class="t" style="left:752.5px;top:431.5px;color:#8c8c8c;font-size:6.2px">OVR</div>
<div class="t" style="left:769.5px;top:432px;color:#8c8c8c;font-size:6.4px">R/W</div>
<svg class="a" style="left:789px;top:435px" width="5" height="5" viewBox="0 0 5 5"><path d="M4.5 0V1M2.5 2V3M4.5 2V3M0.5 4V5M2.5 4V5M4.5 4V5" stroke="#a0a0a0"/></svg>
</body></html>
